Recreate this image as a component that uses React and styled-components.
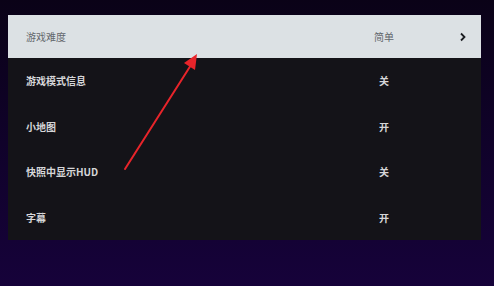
import React from 'react';
import styled, { createGlobalStyle } from 'styled-components';

const GlobalStyle = createGlobalStyle`
  html, body {
    margin: 0;
    padding: 0;
    width: 494px;
    height: 286px;
    overflow: hidden;
  }
  body {
    font-family: "Noto Sans CJK SC", "Noto Sans", sans-serif;
  }
`;

const settings = [
  { label: '游戏难度', value: '简单', active: true },
  { label: '游戏模式信息', value: '关' },
  { label: '小地图', value: '开' },
  { label: '快照中显示HUD', value: '关' },
  { label: '字幕', value: '开' },
];

const Screen = styled.div`
  position: relative;
  width: 494px;
  height: 286px;
  box-sizing: border-box;
  padding: 15px 13px 0 8px;
  background: linear-gradient(180deg, #0a0217 0%, #10022a 50%, #16023a 100%);
`;

const Panel = styled.div`
  display: flex;
  flex-direction: column;
  background: #141318;
`;

const Row = styled.div`
  display: flex;
  align-items: center;
  height: ${(p) => (p.$active ? '43px' : '45.5px')};
  padding: 0 12px 0 18px;
  background: ${(p) => (p.$active ? '#dce1e4' : 'transparent')};
  color: ${(p) => (p.$active ? '#63676c' : '#d6d6d8')};
  font-size: 10px;
  font-weight: ${(p) => (p.$active ? 400 : 700)};
`;

const Label = styled.span`
  flex: 1;
`;

const Value = styled.span`
  width: 40px;
  text-align: center;
  margin-right: 53px;
`;

const Chevron = styled.span`
  width: 12px;
  display: flex;
  justify-content: center;
  color: #1c1e22;
`;

const Arrow = styled.svg`
  position: absolute;
  left: 0;
  top: 0;
  pointer-events: none;
`;

export default function App() {
  return (
    <>
      <GlobalStyle />
      <Screen>
        <Panel>
          {settings.map((s) => (
            <Row key={s.label} $active={s.active}>
              <Label>{s.label}</Label>
              <Value>{s.value}</Value>
              <Chevron>
                {s.active && (
                  <svg width="8" height="10" viewBox="0 0 8 10">
                    <path d="M2 1.5 L5.5 5 L2 8.5" fill="none" stroke="currentColor" strokeWidth="1.8" />
                  </svg>
                )}
              </Chevron>
            </Row>
          ))}
        </Panel>
        <Arrow width="494" height="286" viewBox="0 0 494 286">
          <line x1="125" y1="169" x2="191" y2="65" stroke="#e8242a" strokeWidth="2" strokeLinecap="round" />
          <polygon points="197,54 195,70 184,63" fill="#e8242a" />
        </Arrow>
      </Screen>
    </>
  );
}
